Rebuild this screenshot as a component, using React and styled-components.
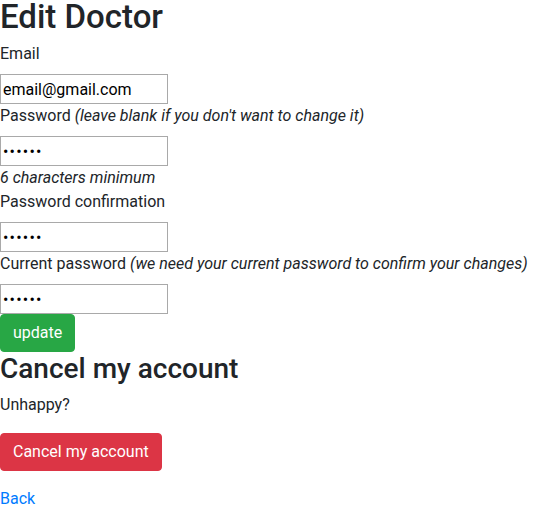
import React from "react";
import styled, { createGlobalStyle } from "styled-components";

const GlobalStyle = createGlobalStyle`
  html, body {
    margin: 0;
    padding: 0;
    background: #fff;
  }
  body {
    font-family: Roboto, "Liberation Sans", sans-serif;
    font-size: 16px;
    line-height: 1.5;
    color: #212529;
  }
`;

const Page = styled.main`
  display: flex;
  flex-direction: column;
  align-items: flex-start;
`;

const Title = styled.h1`
  margin: 0 0 8px;
  font-size: 33px;
  font-weight: 500;
  line-height: 34px;
`;

const Subtitle = styled.h2`
  margin: 0 0 8px;
  font-size: 28px;
  font-weight: 500;
  line-height: 33px;
`;

const Form = styled.form`
  display: flex;
  flex-direction: column;
  align-items: flex-start;
  margin: 0;
`;

const Field = styled.div`
  display: flex;
  flex-direction: column;
  align-items: flex-start;
`;

const Label = styled.label`
  display: block;
  margin-bottom: 8px;
  line-height: 24px;
  white-space: nowrap;
`;

const Hint = styled.i`
  font-style: italic;
`;

const Input = styled.input`
  box-sizing: border-box;
  width: 168px;
  height: 30px;
  margin: 0;
  padding: 1px 2px;
  border: 1px solid #a9a9a9;
  border-radius: 0;
  font-family: Roboto, "Liberation Sans", sans-serif;
  font-size: 16px;
  line-height: 24px;
  letter-spacing: ${(p) => (p.type === "password" ? "1.2px" : "0")};
  color: #000;
  background: #fff;
  outline: none;
`;

const Note = styled.em`
  display: block;
  line-height: 24px;
  font-style: italic;
`;

const Button = styled.button`
  display: inline-block;
  box-sizing: border-box;
  margin: 0;
  padding: 6px 12px;
  border: 1px solid ${(p) => (p.$variant === "danger" ? "#dc3545" : "#28a745")};
  border-radius: 4px;
  background: ${(p) => (p.$variant === "danger" ? "#dc3545" : "#28a745")};
  color: #fff;
  font-family: Roboto, "Liberation Sans", sans-serif;
  font-size: 16px;
  line-height: 24px;
  cursor: pointer;
`;

const Paragraph = styled.p`
  margin: 0;
  line-height: 24px;
`;

const ButtonForm = styled.form`
  margin: 16px 0;
`;

const BackLink = styled.a`
  color: #007bff;
  text-decoration: none;
  line-height: 24px;
`;

export default function App() {
  return (
    <Page>
      <GlobalStyle />
      <Title>Edit Doctor</Title>
      <Form onSubmit={(e) => e.preventDefault()}>
        <Field>
          <Label htmlFor="email">Email</Label>
          <Input id="email" type="email" defaultValue="email@gmail.com" />
        </Field>
        <Field>
          <Label htmlFor="password">
            Password <Hint>(leave blank if you don't want to change it)</Hint>
          </Label>
          <Input id="password" type="password" defaultValue="123456" />
          <Note>6 characters minimum</Note>
        </Field>
        <Field>
          <Label htmlFor="password_confirmation">Password confirmation</Label>
          <Input id="password_confirmation" type="password" defaultValue="123456" />
        </Field>
        <Field>
          <Label htmlFor="current_password">
            Current password <Hint>(we need your current password to confirm your changes)</Hint>
          </Label>
          <Input id="current_password" type="password" defaultValue="123456" />
        </Field>
        <Button type="submit">update</Button>
      </Form>
      <Subtitle>Cancel my account</Subtitle>
      <Paragraph>Unhappy?</Paragraph>
      <ButtonForm onSubmit={(e) => e.preventDefault()}>
        <Button type="submit" $variant="danger">Cancel my account</Button>
      </ButtonForm>
      <BackLink href="#">Back</BackLink>
    </Page>
  );
}
